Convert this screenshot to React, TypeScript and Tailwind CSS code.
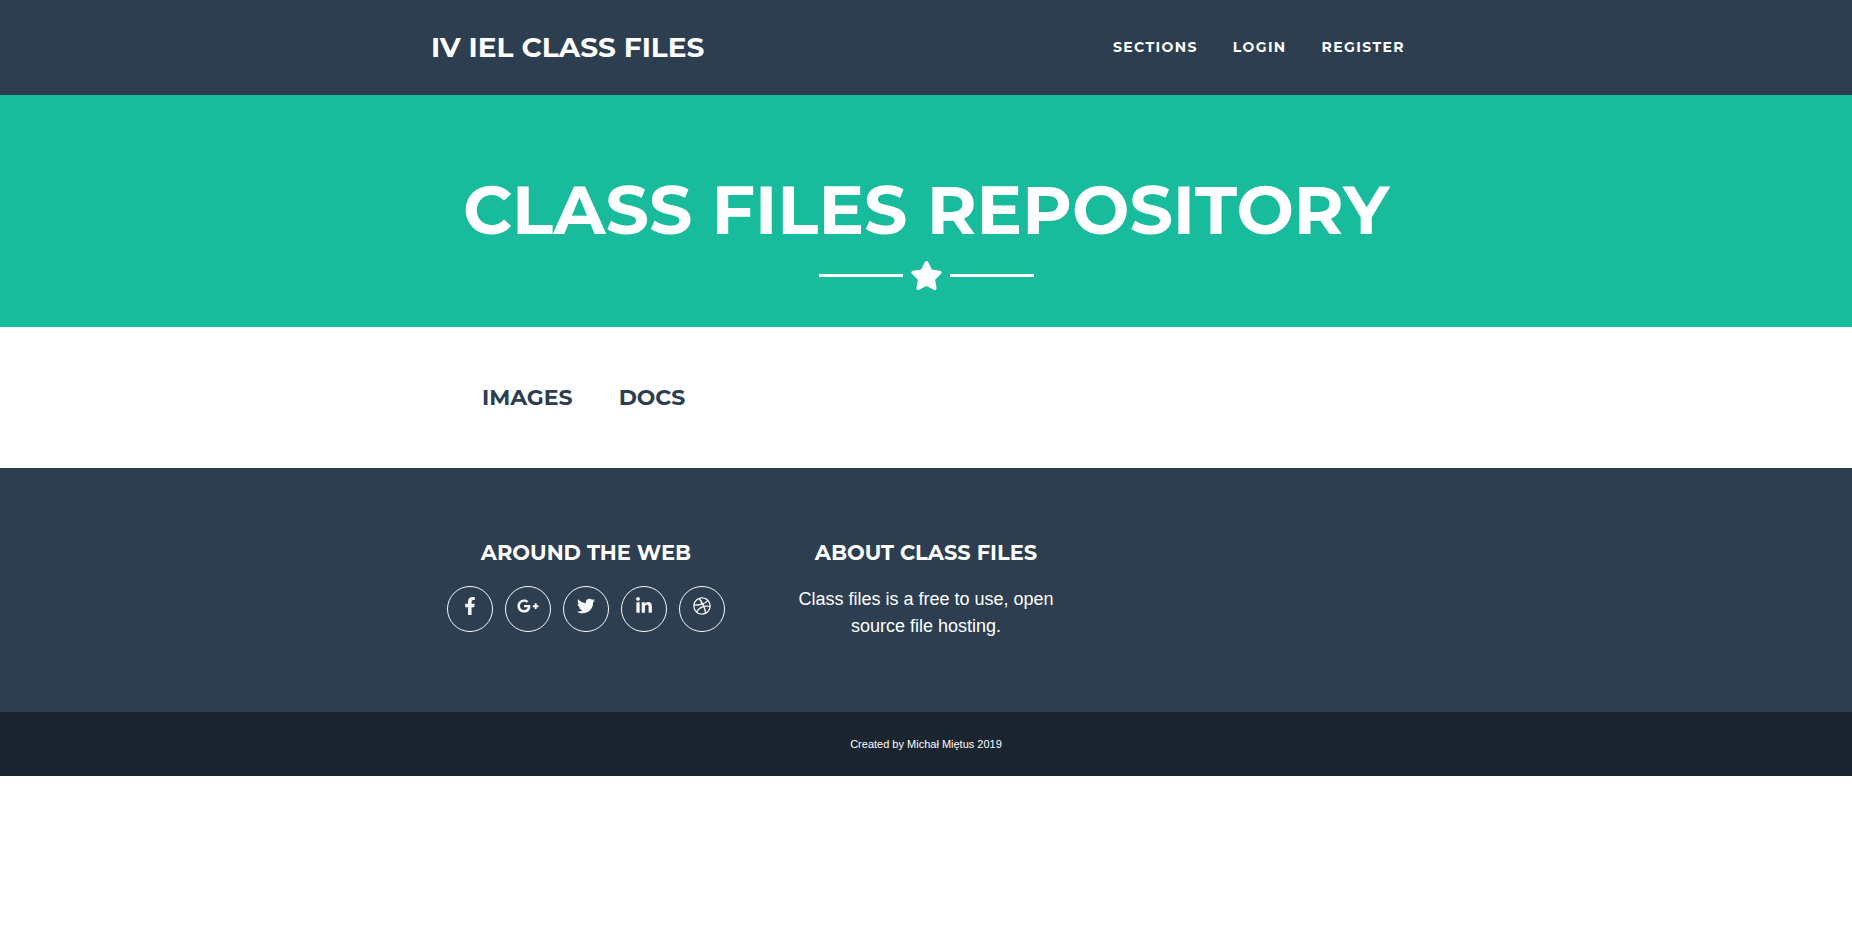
import type { ReactNode } from "react";
import {
  FaDribbble,
  FaFacebookF,
  FaGooglePlusG,
  FaLinkedinIn,
  FaStar,
  FaTwitter,
} from "react-icons/fa";

const navLinks = ["Sections", "Login", "Register"];
const sections = ["Images", "Docs"];
const socials: { label: string; icon: ReactNode }[] = [
  { label: "Facebook", icon: <FaFacebookF className="size-[18px]" /> },
  { label: "Google Plus", icon: <FaGooglePlusG className="h-[18px] w-[22px]" /> },
  { label: "Twitter", icon: <FaTwitter className="size-[18px]" /> },
  { label: "LinkedIn", icon: <FaLinkedinIn className="size-[18px]" /> },
  { label: "Dribbble", icon: <FaDribbble className="size-[18px]" /> },
];

function Container({ children, className = "" }: { children: ReactNode; className?: string }) {
  return <div className={`mx-auto w-full max-w-[1020px] px-[15px] ${className}`}>{children}</div>;
}

function FooterHeading({ children }: { children: ReactNode }) {
  return (
    <h2 className="mb-5 font-['Montserrat',Inter,sans-serif] text-[21px] leading-[26px] font-bold uppercase">
      {children}
    </h2>
  );
}

export default function App() {
  return (
    <div className="bg-white font-['Liberation_Sans',sans-serif] text-lg leading-[27px]">
      <header className="bg-[#2c3e50] font-['Montserrat',Inter,sans-serif] font-bold text-white uppercase">
        <Container className="flex min-h-[95px] flex-wrap items-center justify-between">
          <a href="#top" className="text-[28px]">
            IV IEL Class Files
          </a>
          <nav className="flex gap-[35px] pr-4 pb-0.5 text-sm tracking-widest">
            {navLinks.map((label) => (
              <a key={label} href={`#${label.toLowerCase()}`}>
                {label}
              </a>
            ))}
          </nav>
        </Container>
      </header>

      <section className="bg-[#18bc9c] pt-[72px] pb-[37px] text-center text-white">
        <h1 className="font-['Montserrat',Inter,sans-serif] text-[68px] leading-[86px] font-bold uppercase">
          Class Files Repository
        </h1>
        <div className="mt-2 flex items-center justify-center gap-[7px]">
          <span className="h-[3px] w-[84px] bg-white" />
          <FaStar className="h-[29px] w-[33px]" />
          <span className="h-[3px] w-[84px] bg-white" />
        </div>
      </section>

      <main>
        <Container className="py-14">
          <ul className="flex gap-[46px] pl-[51px] font-['Montserrat',Inter,sans-serif] text-[22px] leading-[29px] font-bold text-[#2c3e50] uppercase">
            {sections.map((name) => (
              <li key={name}>
                <a href={`#${name.toLowerCase()}`}>{name}</a>
              </li>
            ))}
          </ul>
        </Container>
      </main>

      <footer className="bg-[#2c3e50] text-center text-white">
        <Container className="grid grid-cols-1 gap-[30px] py-[72px] md:grid-cols-3">
          <div>
            <FooterHeading>Around the Web</FooterHeading>
            <ul className="flex justify-center gap-3">
              {socials.map(({ label, icon }) => (
                <li key={label}>
                  <a
                    href={`#${label.toLowerCase().replace(" ", "-")}`}
                    aria-label={label}
                    className="flex size-[46px] items-center justify-center rounded-full border border-[#f8f9fa] pb-1.5 text-[#f8f9fa]"
                  >
                    {icon}
                  </a>
                </li>
              ))}
            </ul>
          </div>
          <div>
            <FooterHeading>About Class Files</FooterHeading>
            <p>Class files is a free to use, open source file hosting.</p>
          </div>
        </Container>
      </footer>

      <div className="bg-[#1a252f] py-5 text-center text-[11px] leading-6 text-white">
        Created by Michał Miętus 2019
      </div>
    </div>
  );
}
